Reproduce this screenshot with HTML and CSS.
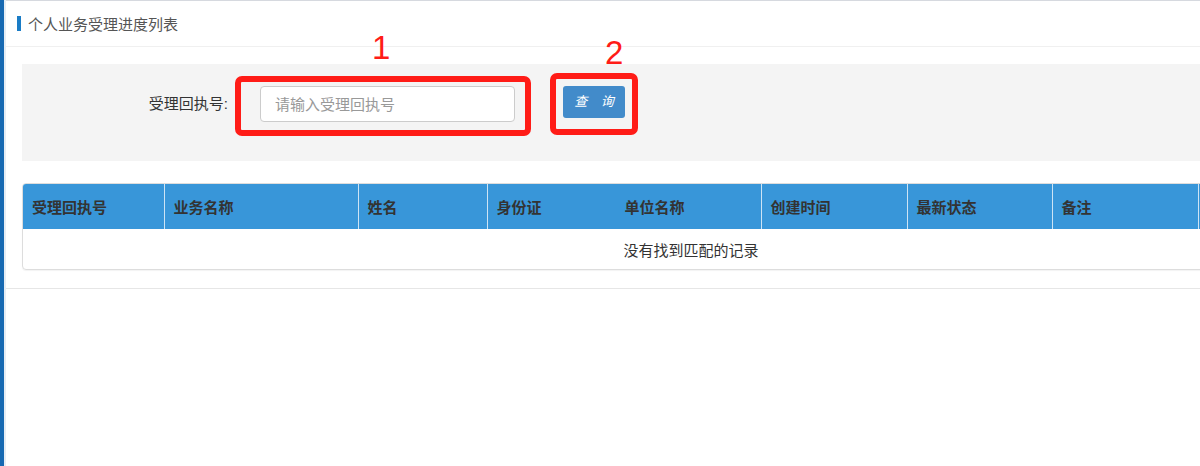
FILE: index.html
```html
<!DOCTYPE html>
<html lang="zh-CN">

<head>
    <meta charset="UTF-8">
    <meta name="viewport" content="width=device-width, initial-scale=1.0">
    <title>个人业务受理进度列表</title>
    <link rel="stylesheet" href="styles.css">
</head>

<body>
    <div class="side"></div>
    <div class="side_gap"></div>
    <div class="panel">
        <div class="panel_title"><span class="title_bar"></span>个人业务受理进度列表</div>
        <div class="panel_body">
            <div class="search_box">
                <label class="search_label">受理回执号:</label>
                <input type="text" class="search_input" placeholder="请输入受理回执号">
                <a href="javascript:;" class="search_btn">查 询</a>
                <!-- 标注 -->
                <div class="mark mark_1"></div>
                <div class="mark mark_2"></div>
                <span class="mark_num num_1">1</span>
                <span class="mark_num num_2">2</span>
            </div>
            <div class="table_wrap">
                <table class="data_table">
                    <colgroup>
                        <col style="width:141px">
                        <col style="width:194px">
                        <col style="width:129px">
                        <col style="width:128px">
                        <col style="width:146px">
                        <col style="width:146px">
                        <col style="width:145px">
                        <col style="width:146px">
                        <col>
                    </colgroup>
                    <thead>
                        <tr>
                            <th>受理回执号</th>
                            <th>业务名称</th>
                            <th>姓名</th>
                            <th class="no_line">身份证</th>
                            <th>单位名称</th>
                            <th>创建时间</th>
                            <th>最新状态</th>
                            <th>备注</th>
                            <th></th>
                        </tr>
                    </thead>
                    <tbody>
                        <tr>
                            <td colspan="9" class="empty">没有找到匹配的记录</td>
                        </tr>
                    </tbody>
                </table>
            </div>
        </div>
    </div>
</body>

</html>
```

FILE: styles.css
```css
* {
    margin: 0;
    padding: 0;
    box-sizing: border-box;
}

a {
    text-decoration: none;
}

body {
    display: flex;
    align-items: flex-start;
    height: 466px;
    overflow: hidden;
    background-color: #fff;
    font-family: "Liberation Sans", "Noto Sans CJK SC", sans-serif;
    font-size: 15px;
    color: #333;
}

.side {
    flex: none;
    width: 4px;
    height: 466px;
    background-color: #1769b2;
}

.side_gap {
    flex: none;
    width: 2px;
    height: 466px;
    background-color: #e6edf4;
}

.panel {
    flex: 1;
    min-width: 0;
    overflow: hidden;
    border-top: 1px solid #d6d9df;
    border-bottom: 1px solid #e6e6e6;
}

.panel_title {
    display: flex;
    align-items: center;
    height: 46px;
    padding-left: 11px;
    border-bottom: 1px solid #f0f0f0;
    color: #555;
    font-size: 15px;
}

.title_bar {
    display: inline-block;
    width: 4px;
    height: 15px;
    margin-right: 7px;
    background-color: #1a7cc6;
}

.panel_body {
    padding: 17px 0 18px 16px;
}

.search_box {
    position: relative;
    display: flex;
    align-items: flex-start;
    height: 97px;
    padding-top: 22px;
    background-color: #f4f4f4;
}

.search_label {
    width: 206px;
    line-height: 36px;
    text-align: right;
    color: #333;
}

.search_input {
    width: 255px;
    height: 36px;
    margin-left: 32px;
    padding-left: 14px;
    border: 1px solid #ccc;
    border-radius: 4px;
    background-color: #fff;
    font-family: inherit;
    font-size: 15px;
    outline: none;
}

.search_input::placeholder {
    color: #999;
}

.search_btn {
    width: 62px;
    height: 32px;
    margin-left: 48px;
    border-radius: 3px;
    background-color: #428bca;
    color: #fff;
    font-size: 13px;
    font-style: italic;
    line-height: 32px;
    text-align: center;
    letter-spacing: 5px;
    text-indent: 5px;
}

.mark {
    position: absolute;
    border: 6px solid #ff1c17;
    border-radius: 7px;
}

.mark_1 {
    left: 213px;
    top: 12px;
    width: 296px;
    height: 60px;
}

.mark_2 {
    left: 528px;
    top: 9px;
    width: 88px;
    height: 62px;
}

.mark_num {
    position: absolute;
    color: #ff1c17;
    font-size: 33px;
    line-height: 1;
}

.num_1 {
    left: 350px;
    top: -33px;
}

.num_2 {
    left: 583px;
    top: -28px;
}

.table_wrap {
    width: 1338px;
    margin-top: 22px;
    border: 1px solid #ddd;
    border-radius: 4px;
    box-shadow: 0 1px 1px rgba(0, 0, 0, .05);
    overflow: hidden;
}

.data_table {
    width: 100%;
    table-layout: fixed;
    border-collapse: collapse;
}

.data_table th {
    height: 45px;
    padding-left: 9px;
    border-left: 1px solid #cde4f5;
    background-color: #3896d9;
    color: #333;
    font-weight: bold;
    text-align: left;
}

.data_table th:first-child {
    border-left: none;
}

.data_table th.no_line + th {
    border-left-color: #3896d9;
}

.data_table td.empty {
    height: 40px;
    text-align: center;
    color: #333;
}
```
